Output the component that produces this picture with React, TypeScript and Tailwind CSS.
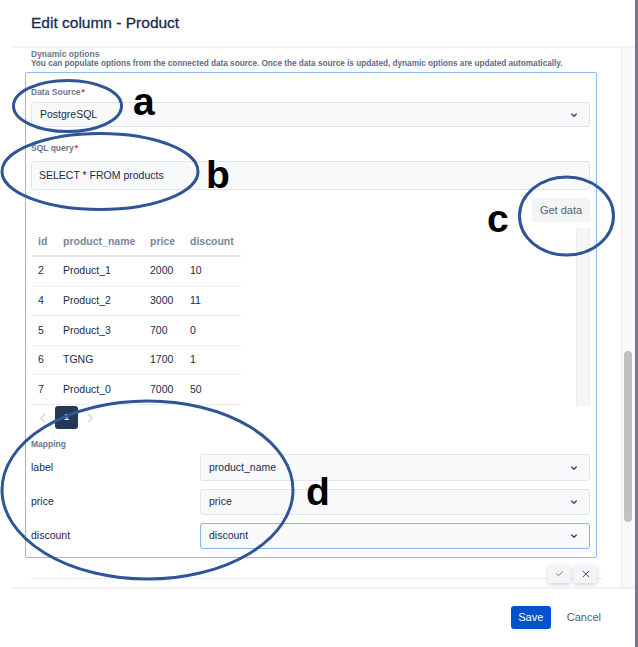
import React from 'react';

const rows = [
  { id: '2', name: 'Product_1', price: '2000', discount: '10' },
  { id: '4', name: 'Product_2', price: '3000', discount: '11' },
  { id: '5', name: 'Product_3', price: '700', discount: '0' },
  { id: '6', name: 'TGNG', price: '1700', discount: '1' },
  { id: '7', name: 'Product_0', price: '7000', discount: '50' },
];

const mapping = [
  { label: 'label', value: 'product_name', focused: false, h: 'h-[27px]' },
  { label: 'price', value: 'price', focused: false, h: 'h-[26px]' },
  { label: 'discount', value: 'discount', focused: true, h: 'h-[26px]' },
];

const Chevron: React.FC = () => (
  <svg width="10" height="10" viewBox="0 0 24 24" fill="none" stroke="#344563" strokeWidth="3.2" strokeLinecap="round" strokeLinejoin="round">
    <path d="M6.5 9.5l5.5 5.5 5.5-5.5" />
  </svg>
);

const Label: React.FC<{ text: string; required?: boolean }> = ({ text, required }) => (
  <div className="text-[8.5px] leading-[10px] font-bold text-[#6b778c]">
    {text}
    {required && <span className="text-[#de350b] ml-[1px]">*</span>}
  </div>
);

const Select: React.FC<{ value: string; focused?: boolean; className?: string }> = ({ value, focused, className }) => (
  <div
    className={`flex items-center justify-between rounded-[3px] border-[1.5px] pl-[8px] pr-[10px] text-[10.5px] text-[#172b4d] ${
      focused ? 'border-[#85b4fa] bg-[#f9fafb]' : 'border-[#e3e5e9] bg-[#f8f9fa]'
    } ${className ?? ''}`}
  >
    <span>{value}</span>
    <Chevron />
  </div>
);

// annotation marks drawn over the screenshot
const Annotations: React.FC = () => (
  <svg className="absolute inset-0 pointer-events-none" width="638" height="647" viewBox="0 0 638 647">
    <g fill="none" stroke="#2f5597" strokeWidth="3">
      <ellipse cx="67.5" cy="106" rx="54" ry="25.5" />
      <ellipse cx="100" cy="171.5" rx="98" ry="38" />
      <ellipse cx="566.5" cy="216" rx="47" ry="39" />
      <ellipse cx="147.5" cy="490" rx="145.5" ry="89" />
    </g>
    <g fill="#000" fontFamily="'Liberation Sans', Arial, sans-serif" fontWeight="700" fontSize="39">
      <text x="133" y="115">a</text>
      <text x="206" y="188">b</text>
      <text x="487" y="232">c</text>
      <text x="306" y="505">d</text>
    </g>
  </svg>
);

export default function App() {
  return (
    <div className="relative w-[638px] h-[647px] overflow-hidden bg-white flex font-['Liberation_Sans',Arial,sans-serif]">
      <div className="w-[635px] h-full flex flex-col">
        {/* header */}
        <div className="h-[46px] shrink-0 flex items-center pl-[31px]">
          <h1 className="text-[15.5px] font-medium text-[#172b4d] [-webkit-text-stroke:0.3px_#172b4d]">Edit column - Product</h1>
        </div>
        <div className="ml-[12px] h-[2px] shrink-0 bg-[#f1f2f4]" />

        {/* scrolling body */}
        <div className="h-[539px] shrink-0 flex">
          <div className="w-[621px] pl-[25px] pt-[1px]">
            <div className="pl-[6px] text-[8.5px] font-bold leading-[10px] text-[#6b778c]">Dynamic options</div>
            <div className="pl-[6px] text-[8.2px] font-bold leading-[10px] text-[#5e6c84] whitespace-nowrap">
              You can populate options from the connected data source. Once the data source is updated, dynamic options are updated automatically.
            </div>

            <div className="mt-[3px] w-[572px] rounded-[2px] border border-[#8fbaf7] pl-[5px] pr-[6px] pt-[14px] pb-[8px]">
              <Label text="Data Source" required />
              <Select value="PostgreSQL" className="mt-[5px] h-[25px]" />

              <div className="mt-[16px]">
                <Label text="SQL query" required />
              </div>
              <div className="mt-[8px] h-[29px] rounded-[3px] border-[1.5px] border-[#e3e5e9] bg-[#f8f9fa] pl-[7px] flex items-center text-[10.5px] text-[#172b4d]">
                SELECT * FROM products
              </div>

              <div className="mt-[8px] flex justify-end">
                <button className="h-[24px] w-[58px] rounded-[3px] bg-[#f4f5f7] text-[11px] text-[#505f79]">Get data</button>
              </div>

              <div className="mt-[6px] flex">
                <div className="w-[210px] text-[10.5px]">
                  <div className="flex h-[29px] items-center pt-[1px] border-b-2 border-[#e6e8ec] font-bold text-[#7a869a]">
                    <div className="w-[25px] pl-[7px]">id</div>
                    <div className="w-[87px] pl-[7px]">product_name</div>
                    <div className="w-[40px] pl-[7px]">price</div>
                    <div className="w-[58px] pl-[7px]">discount</div>
                  </div>
                  {rows.map(r => (
                    <div key={r.id} className="flex h-[29.6px] items-center border-b border-[#e9eaee] text-[#172b4d]">
                      <div className="w-[25px] pl-[7px]">{r.id}</div>
                      <div className="w-[87px] pl-[7px]">{r.name}</div>
                      <div className="w-[40px] pl-[7px]">{r.price}</div>
                      <div className="w-[58px] pl-[7px]">{r.discount}</div>
                    </div>
                  ))}
                </div>
                <div className="flex-1" />
                <div className="w-[14px] h-[178px] bg-[#f6f6f7] border-x border-[#ededee]" />
              </div>

              <div className="flex h-[23px] items-center">
                <div className="w-[24px] flex justify-center">
                  <svg width="8" height="10" viewBox="0 0 8 12" fill="none" stroke="#c1c7d0" strokeWidth="1.3">
                    <path d="M6 1L1.5 6 6 11" />
                  </svg>
                </div>
                <div className="w-[23px] h-[23px] rounded-[3px] bg-[#253858] flex items-center justify-center text-[9px] font-bold text-white">1</div>
                <div className="w-[24px] flex justify-center">
                  <svg width="8" height="10" viewBox="0 0 8 12" fill="none" stroke="#c1c7d0" strokeWidth="1.3">
                    <path d="M2 1l4.5 5L2 11" />
                  </svg>
                </div>
              </div>

              <div className="mt-[10px]">
                <Label text="Mapping" />
              </div>
              <div className="mt-[5px] flex flex-col gap-[8px]">
                {mapping.map(m => (
                  <div key={m.label} className="flex items-center">
                    <div className="w-[169px] text-[10.5px] text-[#172b4d]">{m.label}</div>
                    <Select value={m.value} focused={m.focused} className={`flex-1 ${m.h}`} />
                  </div>
                ))}
              </div>
            </div>

            {/* inline edit confirm */}
            <div className="relative h-[30px] w-[578px]">
              <div className="absolute left-[6px] right-0 top-[20px] h-px bg-[#ebecf0]" />
              <div className="absolute right-[6px] top-[6px] flex gap-[4px]">
                <button className="w-[22px] h-[19px] rounded-[3px] bg-[#f4f5f7] shadow-[0_2px_4px_rgba(9,30,66,0.18)] flex items-center justify-center">
                  <svg width="9" height="9" viewBox="0 0 24 24" fill="none" stroke="#6b778c" strokeWidth="2.6" strokeLinecap="round" strokeLinejoin="round">
                    <path d="M4 13l5 5L20 7" />
                  </svg>
                </button>
                <button className="w-[23px] h-[19px] rounded-[3px] bg-[#f4f5f7] shadow-[0_2px_4px_rgba(9,30,66,0.18)] flex items-center justify-center">
                  <svg width="10" height="10" viewBox="0 0 24 24" fill="none" stroke="#42526e" strokeWidth="2.2" strokeLinecap="round">
                    <path d="M5 5l14 14M19 5L5 19" />
                  </svg>
                </button>
              </div>
            </div>
          </div>

          {/* body scrollbar */}
          <div className="w-[14px] h-full bg-[#f9f9fa] border-l border-[#eeeeef] pt-[303px] pl-[2px]">
            <div className="w-[8px] h-[171px] rounded-full bg-[#c1c1c1]" />
          </div>
        </div>

        <div className="ml-[12px] h-[2px] shrink-0 bg-[#f1f2f4]" />

        {/* footer */}
        <div className="flex-1 flex justify-end items-start pt-[17px] pr-[34px] gap-[16px]">
          <button className="h-[23px] w-[40px] rounded-[3px] bg-[#0052cc] text-[11px] text-white">Save</button>
          <button className="h-[23px] text-[11px] text-[#505f79]">Cancel</button>
        </div>
      </div>
      <div className="w-[3px] h-full bg-[#737a86]" />

      <Annotations />
    </div>
  );
}
